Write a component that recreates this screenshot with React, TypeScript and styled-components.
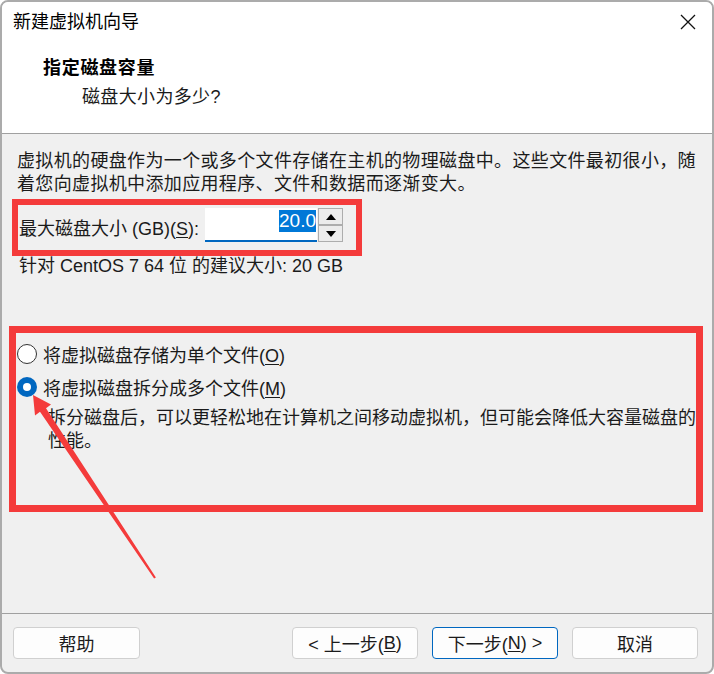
import styled, { createGlobalStyle } from "styled-components"

const FONT = `"Liberation Sans", "Noto Sans CJK SC", sans-serif`
const RED = "#f43b3b"

const GlobalStyle = createGlobalStyle`
  html, body {
    margin: 0;
    padding: 0;
    background: #ffffff;
  }
  body {
    font-family: ${FONT};
    color: #1b1b1b;
  }
`

const Style = {
  Window: styled.div`
    position: relative;
    width: 714px;
    height: 674px;
    box-sizing: border-box;
    border: 2px solid #ababab;
    border-radius: 8px;
    overflow: hidden;
    display: flex;
    flex-direction: column;
    background: #f0f0f0;
  `,
  TopPanel: styled.div`
    height: 131px;
    background: #ffffff;
    border-bottom: 1px solid #a0a0a0;
  `,
  TitleBar: styled.div`
    height: 40px;
    display: flex;
    align-items: center;
    justify-content: space-between;
    padding: 0 16px 0 11px;
  `,
  Title: styled.div`
    font-size: 18px;
    line-height: 1;
    color: #000;
  `,
  Close: styled.svg`
    width: 16px;
    height: 16px;
  `,
  Heading: styled.div`
    margin-top: 12px;
    padding-left: 41px;
    font-size: 18px;
    font-weight: 700;
    letter-spacing: 0.7px;
    line-height: 29px;
    color: #000;
  `,
  Subtitle: styled.div`
    padding-left: 80px;
    font-size: 18px;
    letter-spacing: 0.35px;
    line-height: 29px;
  `,
  Content: styled.div`
    flex: 1;
    display: flex;
    flex-direction: column;
    padding-left: 15px;
    font-size: 18px;
  `,
  Intro: styled.div`
    margin-top: 16px;
    line-height: 23px;
    letter-spacing: 0.35px;
    white-space: nowrap;
  `,
  SizeBox: styled.div`
    margin: 3px 0 0 -5px;
    width: 350px;
    height: 57px;
    box-sizing: border-box;
    border: 6px solid ${RED};
    padding: 3px 0 8px 1px;
    display: flex;
    align-items: center;
  `,
  SizeLabel: styled.div`
    width: 186px;
    margin-top: 4px;
    white-space: nowrap;
  `,
  SizeInput: styled.div`
    width: 112px;
    height: 34px;
    box-sizing: border-box;
    background: #ffffff;
    border-bottom: 2px solid #0067c0;
    display: flex;
    justify-content: flex-end;
    align-items: flex-start;
    padding: 2px 1px 0 0;
  `,
  Selected: styled.span`
    background: #0078d7;
    color: #ffffff;
    font-size: 19px;
    line-height: 22px;
  `,
  Spinner: styled.div`
    margin-left: 1px;
    width: 25px;
    height: 34px;
    display: flex;
    flex-direction: column;
  `,
  SpinButton: styled.div`
    flex: 1;
    box-sizing: border-box;
    border: 1px solid #adadad;
    background: #ececec;
    display: flex;
    align-items: center;
    justify-content: center;
  `,
  Recommend: styled.div`
    margin-left: 2px;
    line-height: 21px;
    white-space: nowrap;
  `,
  OptionsBox: styled.div`
    margin: 49px 0 0 -8px;
    width: 694px;
    height: 186px;
    box-sizing: border-box;
    border: 7px solid ${RED};
    padding: 4px 0 0 1px;
  `,
  RadioRow: styled.div`
    height: 33px;
    display: flex;
    align-items: center;
    gap: 6px;
    white-space: nowrap;
  `,
  Radio: styled.span<{ $checked?: boolean }>`
    position: relative;
    width: 20px;
    height: 20px;
    box-sizing: border-box;
    border-radius: 50%;
    border: ${(p) => (p.$checked ? "none" : "1px solid #333333")};
    background: ${(p) => (p.$checked ? "#0067c0" : "#ffffff")};
    &::after {
      content: "";
      display: ${(p) => (p.$checked ? "block" : "none")};
      position: absolute;
      left: 6px;
      top: 6px;
      width: 8px;
      height: 8px;
      border-radius: 50%;
      background: #ffffff;
    }
  `,
  Description: styled.div`
    margin-top: 4px;
    padding-left: 31px;
    line-height: 23px;
    white-space: nowrap;
  `,
  Key: styled.u`
    text-underline-offset: 2px;
  `,
  Footer: styled.div`
    border-top: 1px solid #a0a0a0;
    padding: 13px 14px 13px 11px;
    display: flex;
    gap: 14px;
  `,
  Button: styled.div<{ $primary?: boolean; $first?: boolean }>`
    width: ${(p) => (p.$first ? "127px" : "126px")};
    margin-right: ${(p) => (p.$first ? "auto" : "0")};
    height: 32px;
    box-sizing: border-box;
    border: 1px solid ${(p) => (p.$primary ? "#0067c0" : "#d0d0d0")};
    border-radius: 4px;
    background: #fdfdfd;
    display: flex;
    align-items: center;
    justify-content: center;
    font-size: 18px;
    white-space: nowrap;
  `,
  ArrowLayer: styled.svg`
    position: absolute;
    top: -2px;
    left: -2px;
    width: 714px;
    height: 674px;
    pointer-events: none;
  `,
}

function Triangle({ up }: { up?: boolean }) {
  return (
    <svg width="10" height="6" viewBox="0 0 10 6">
      <polygon points={up ? "0,6 10,6 5,0" : "0,0 10,0 5,6"} fill="#000" />
    </svg>
  )
}

export default function App() {
  return (
    <>
      <GlobalStyle />
      <Style.Window>
        <Style.TopPanel>
          <Style.TitleBar>
            <Style.Title>新建虚拟机向导</Style.Title>
            <Style.Close viewBox="0 0 16 16">
              <path d="M1 1 L15 15 M15 1 L1 15" stroke="#111" strokeWidth="1.3" />
            </Style.Close>
          </Style.TitleBar>
          <Style.Heading>指定磁盘容量</Style.Heading>
          <Style.Subtitle>磁盘大小为多少?</Style.Subtitle>
        </Style.TopPanel>

        <Style.Content>
          <Style.Intro>
            虚拟机的硬盘作为一个或多个文件存储在主机的物理磁盘中。这些文件最初很小，随
            <br />
            着您向虚拟机中添加应用程序、文件和数据而逐渐变大。
          </Style.Intro>

          <Style.SizeBox>
            <Style.SizeLabel>
              最大磁盘大小 (GB)(<Style.Key>S</Style.Key>):
            </Style.SizeLabel>
            <Style.SizeInput>
              <Style.Selected>20.0</Style.Selected>
            </Style.SizeInput>
            <Style.Spinner>
              <Style.SpinButton>
                <Triangle up />
              </Style.SpinButton>
              <Style.SpinButton>
                <Triangle />
              </Style.SpinButton>
            </Style.Spinner>
          </Style.SizeBox>

          <Style.Recommend>针对 CentOS 7 64 位 的建议大小: 20 GB</Style.Recommend>

          <Style.OptionsBox>
            <Style.RadioRow>
              <Style.Radio />
              <span>
                将虚拟磁盘存储为单个文件(<Style.Key>O</Style.Key>)
              </span>
            </Style.RadioRow>
            <Style.RadioRow>
              <Style.Radio $checked />
              <span>
                将虚拟磁盘拆分成多个文件(<Style.Key>M</Style.Key>)
              </span>
            </Style.RadioRow>
            <Style.Description>
              拆分磁盘后，可以更轻松地在计算机之间移动虚拟机，但可能会降低大容量磁盘的
              <br />
              性能。
            </Style.Description>
          </Style.OptionsBox>
        </Style.Content>

        <Style.Footer>
          <Style.Button $first>帮助</Style.Button>
          <Style.Button>
            &lt; 上一步(<Style.Key>B</Style.Key>)
          </Style.Button>
          <Style.Button $primary>
            下一步(<Style.Key>N</Style.Key>) &gt;
          </Style.Button>
          <Style.Button>取消</Style.Button>
        </Style.Footer>

        <Style.ArrowLayer viewBox="0 0 714 674">
          <polygon
            points="33,395 51,404.5 46,408.2 155.9,577.4 154.1,578.6 40,411.8 35,415.5"
            fill={RED}
          />
        </Style.ArrowLayer>
      </Style.Window>
    </>
  )
}
